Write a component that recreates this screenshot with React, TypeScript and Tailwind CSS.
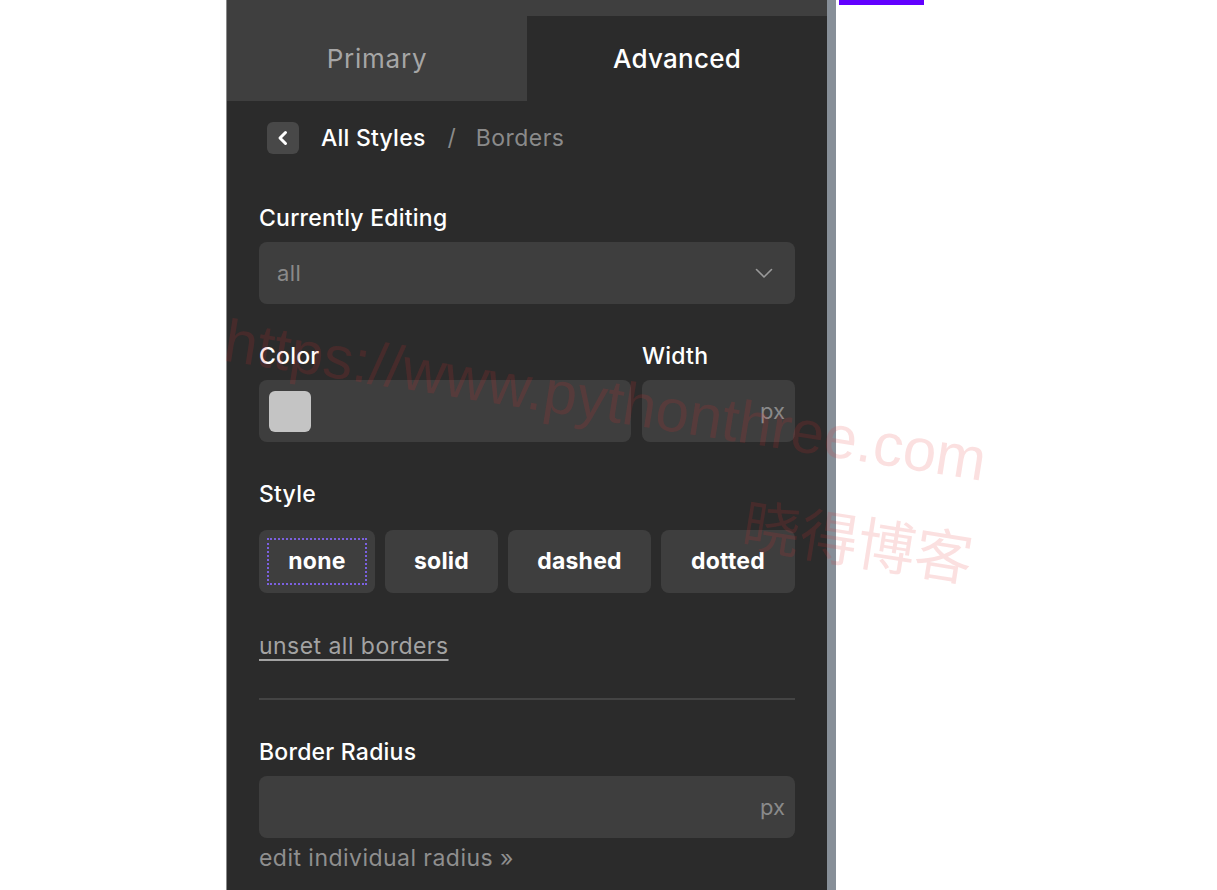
import { useState } from 'react';

const styleOptions = ['none', 'solid', 'dashed', 'dotted'];

const Field = ({ children }: { children?: React.ReactNode }) => (
  <div className="flex h-[62px] items-center rounded-lg bg-[#3e3e3e] px-[10px]">
    {children}
  </div>
);

const Label = ({ children }: { children: React.ReactNode }) => (
  <div className="h-[28px] text-[23px] leading-[28px] font-medium tracking-[0.01em] text-white">{children}</div>
);

const App = () => {
  const [tab, setTab] = useState('Advanced');
  const [borderStyle, setBorderStyle] = useState('none');

  return (
    <div
      className="relative flex h-[890px] w-full overflow-hidden bg-white"
      style={{ fontFamily: 'Inter, "Noto Sans", sans-serif' }}
    >
      <div className="w-[226px] shrink-0" />
      <div className="w-px shrink-0 bg-[#8a8a8a]" />

      {/* side panel */}
      <div className="flex w-[600px] shrink-0 flex-col bg-[#2b2b2b]">
        <div className="h-[16px] bg-[#3f3f3f]" />
        <div className="flex h-[85px]">
          {['Primary', 'Advanced'].map(t => (
            <button
              key={t}
              onClick={() => setTab(t)}
              className={
                tab === t
                  ? 'flex flex-1 items-center justify-center bg-[#2b2b2b] text-[26px] font-medium tracking-[0.01em] text-white'
                  : 'flex flex-1 items-center justify-center bg-[#3f3f3f] text-[26px] tracking-[0.03em] text-[#a6a6a6]'
              }
            >
              {t}
            </button>
          ))}
        </div>

        <div className="flex flex-col px-[32px]">
          {/* breadcrumb */}
          <div className="mt-[21px] flex h-[32px] items-center pl-[8px]">
            <button className="flex h-[32px] w-[32px] items-center justify-center rounded-md bg-[#484848]">
              <svg width="14" height="16" viewBox="0 0 14 16" fill="none">
                <path d="M9.5 2.5 L4 8 L9.5 13.5" stroke="white" strokeWidth="3" strokeLinecap="round" strokeLinejoin="round" />
              </svg>
            </button>
            <span className="ml-[22px] text-[23px] font-medium tracking-[0.01em] text-white">All Styles</span>
            <span className="ml-[22px] text-[23px] text-[#8a8a8a]">/</span>
            <span className="ml-[20px] text-[23px] tracking-[0.02em] text-[#8a8a8a]">Borders</span>
          </div>

          <div className="mt-[50px]">
            <Label>Currently Editing</Label>
          </div>
          <div className="mt-[10px]">
            <div className="flex h-[62px] items-center justify-between rounded-lg bg-[#3e3e3e] pl-[18px] pr-[22px]">
              <span className="text-[22px] tracking-[0.02em] text-[#8a8a8a]">all</span>
              <svg width="18" height="11" viewBox="0 0 18 11" fill="none">
                <path d="M1.5 1.5 L9 9 L16.5 1.5" stroke="#9a9a9a" strokeWidth="1.6" strokeLinecap="round" strokeLinejoin="round" />
              </svg>
            </div>
          </div>

          {/* color / width */}
          <div className="mt-[38px] flex gap-[11px]">
            <div className="flex-1">
              <Label>Color</Label>
              <div className="mt-[10px]">
                <Field>
                  <div className="h-[41px] w-[42px] rounded-md bg-[#c4c4c4]" />
                </Field>
              </div>
            </div>
            <div className="w-[153px]">
              <Label>Width</Label>
              <div className="mt-[10px]">
                <Field>
                  <span className="ml-auto pr-[-2px] text-[22px] text-[#8a8a8a]">px</span>
                </Field>
              </div>
            </div>
          </div>

          <div className="mt-[38px]">
            <Label>Style</Label>
          </div>
          <div className="mt-[22px] flex h-[63px] gap-[10px]">
            {styleOptions.map(o => (
              <button
                key={o}
                onClick={() => setBorderStyle(o)}
                className={
                  (o === 'dashed' ? 'w-[143px] ' : o === 'dotted' ? 'flex-1 ' : o === 'none' ? 'w-[116px] ' : 'w-[113px] ') +
                  'rounded-lg bg-[#3e3e3e] p-[8px] text-[23px] font-bold tracking-[0.01em] text-white'
                }
              >
                <div
                  className={
                    borderStyle === o
                      ? 'flex h-full items-center justify-center border-2 border-dotted border-[#7b61e0]'
                      : 'flex h-full items-center justify-center'
                  }
                >
                  {o}
                </div>
              </button>
            ))}
          </div>

          <div className="mt-[39px]">
            <span className="text-[23px] leading-[28px] tracking-[0.02em] text-[#a3a3a3] underline decoration-2 underline-offset-[5px]">
              unset all borders
            </span>
          </div>

          <div className="mt-[38px] h-[2px] bg-[#444444]" />

          <div className="mt-[38px]">
            <Label>Border Radius</Label>
          </div>
          <div className="mt-[10px]">
            <Field>
              <span className="ml-auto text-[22px] text-[#8a8a8a]">px</span>
            </Field>
          </div>
          <div className="mt-[6px] text-[23px] leading-[28px] tracking-[0.02em] text-[#8f8f8f]">edit individual radius »</div>
        </div>
      </div>

      <div className="w-[9px] shrink-0 bg-[#878f98]" />
      <div className="flex-1">
        <div className="ml-[3px] h-[5px] w-[85px] bg-[#6200ff]" />
      </div>

      {/* watermark */}
      <div className="pointer-events-none absolute inset-0" style={{ fontFamily: '"Liberation Sans", "Noto Sans CJK SC", sans-serif' }}>
        <div className="absolute left-[232px] top-[296px] origin-top-left rotate-[9deg] whitespace-nowrap text-[60px] text-[#e63232]/15">
          https://www.pythonthree.com
        </div>
        <div className="absolute left-[750px] top-[482px] origin-top-left rotate-[9deg] whitespace-nowrap text-[58px] text-[#e63232]/15">
          晓得博客
        </div>
      </div>
    </div>
  );
};

export default App;
